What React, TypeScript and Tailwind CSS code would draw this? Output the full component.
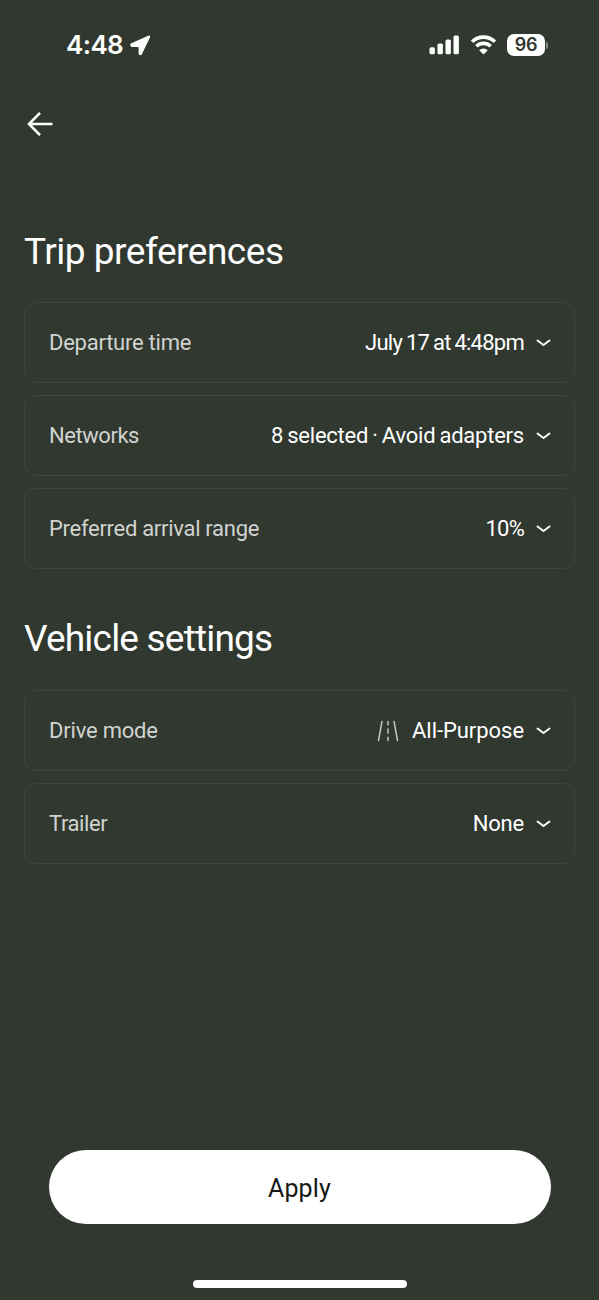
import type { ReactNode } from "react";

function LocationArrow() {
  return (
    <svg className="h-[21px] w-[21px]" viewBox="0 0 21 21" fill="#fff">
      <path d="M18.200.8 1.400 8.300C-.5 9.200 0 11.900 2.100 11.900h5.800c.5 0 .7.2.7.7v5.700c0 2.200 2.500 2.700 3.400.8L19.900 2.500C20.500 1.200 19.500.2 18.200.8Z" />
    </svg>
  );
}

function SignalBars() {
  return (
    <svg className="h-5 w-[31px]" viewBox="0 0 31 20" fill="#fff">
      <rect x="0.500" y="12.200" width="5.400" height="7" rx="1.500" />
      <rect x="8.500" y="8.500" width="5.400" height="10.700" rx="1.500" />
      <rect x="16.500" y="4.500" width="5.400" height="14.700" rx="1.500" />
      <rect x="24.500" y="0.500" width="5.400" height="18.700" rx="1.500" />
    </svg>
  );
}

function WifiIcon() {
  return (
    <svg className="h-5 w-[27px]" viewBox="0 0 27 20" fill="none" stroke="#fff">
      <path d="M2.100 6.700a16.300 16.300 0 0 1 22.800 0" strokeWidth="3.700" />
      <path d="M6.400 11.300a10 10 0 0 1 14.200 0" strokeWidth="3.600" />
      <path d="M13.500 19.600 9.200 15.300a6.100 6.100 0 0 1 8.600 0Z" fill="#fff" stroke="none" />
    </svg>
  );
}

function Battery({ level }: { level: number }) {
  return (
    <div className="flex items-center gap-[1px]">
      <div className="flex h-[22px] w-[38px] items-center justify-center rounded-[7px] bg-white font-[Inter,sans-serif] text-[18px] font-semibold leading-none tracking-[-0.3px] text-[#303830]">
        {level}
      </div>
      <div className="h-[7px] w-[2px] rounded-r-full bg-[#858b84]" />
    </div>
  );
}

function StatusBar() {
  return (
    <div className="flex h-[90px] items-center justify-between pl-[66px] pr-[51px]">
      <div className="flex items-center gap-[6px]">
        <span className="w-[58px] whitespace-nowrap font-[Inter,sans-serif] text-[26px] font-semibold leading-none tracking-[-0.6px]">
          4:48
        </span>
        <LocationArrow />
      </div>
      <div className="flex items-center gap-[10px]">
        <SignalBars />
        <WifiIcon />
        <Battery level={96} />
      </div>
    </div>
  );
}

function ChevronDown() {
  return (
    <svg
      className="h-[10px] w-[15px]"
      viewBox="0 0 15 10"
      fill="none"
      stroke="#fff"
      strokeWidth="1.900"
      strokeLinecap="round"
      strokeLinejoin="round"
    >
      <path d="m1.500 2.500 6 4.600 6-4.600" />
    </svg>
  );
}

function RoadIcon() {
  return (
    <svg
      className="h-[22px] w-[22px]"
      viewBox="0 0 22 22"
      fill="none"
      stroke="#c1c5c0"
      strokeWidth="1.500"
      strokeLinecap="round"
    >
      <path d="M5 1.500 1.500 20.500M17 1.500l3.500 19M11 1.500v3.200M11 9v4M11 17.300v3.200" />
    </svg>
  );
}

interface SettingRowProps {
  label: string;
  value: string;
  labelClass?: string;
  valueClass?: string;
  icon?: ReactNode;
}

function SettingRow({ label, value, labelClass = "", valueClass = "", icon }: SettingRowProps) {
  return (
    <button className="flex h-[81px] w-full items-center justify-between rounded-[12px] border border-[#3d463d] pl-6 pr-[23px] text-[22px] leading-none">
      <span className={`whitespace-nowrap pt-[1px] text-[#d0d3cf] ${labelClass}`}>{label}</span>
      <span className="flex items-center">
        {icon}
        <span className={`whitespace-nowrap pt-[1px] ${valueClass}`}>{value}</span>
        <span className="ml-3">
          <ChevronDown />
        </span>
      </span>
    </button>
  );
}

export default function App() {
  return (
    <div className="flex h-[1300px] w-[599px] flex-col overflow-hidden bg-[#303830] font-[Roboto,sans-serif] text-white">
      <StatusBar />

      <div className="flex h-[68px] items-center pl-[27px]">
        <svg
          className="h-[26px] w-[26px]"
          viewBox="0 0 26 26"
          fill="none"
          stroke="#fff"
          strokeWidth="2.600"
        >
          <path d="M13 1.800 2 13l11 11.200M2.500 13h23" />
        </svg>
      </div>

      <main className="flex-1 px-6">
        <h1 className="mt-[72px] h-[72px] whitespace-nowrap text-[37px] leading-[44px] tracking-[-0.48px]">
          Trip preferences
        </h1>
        <div className="flex flex-col gap-3">
          <SettingRow
            label="Departure time"
            value="July 17 at 4:48pm"
            labelClass="tracking-[-0.25px]"
            valueClass="tracking-[-0.75px] [word-spacing:-0.9px]"
          />
          <SettingRow
            label="Networks"
            value="8 selected · Avoid adapters"
            labelClass="tracking-[-0.45px]"
            valueClass="tracking-[-0.22px] [word-spacing:-1.200px]"
          />
          <SettingRow
            label="Preferred arrival range"
            value="10%"
            labelClass="tracking-[-0.29px]"
            valueClass="tracking-[-0.8px]"
          />
        </div>

        <h2 className="mt-[48px] h-[73px] whitespace-nowrap text-[37px] leading-[44px] tracking-[-0.8px]">
          Vehicle settings
        </h2>
        <div className="flex flex-col gap-3">
          <SettingRow
            label="Drive mode"
            value="All-Purpose"
            labelClass="tracking-[-0.2px]"
            valueClass="tracking-[-0.05px]"
            icon={
              <span className="mr-[13px]">
                <RoadIcon />
              </span>
            }
          />
          <SettingRow
            label="Trailer"
            value="None"
            labelClass="tracking-[-0.4px]"
            valueClass="tracking-[-0.2px]"
          />
        </div>
      </main>

      <footer className="flex h-[150px] flex-col items-center">
        <button className="h-[74px] w-[502px] rounded-full bg-white pt-[3px] text-[25px] tracking-[0.15px] text-[#151815]">
          Apply
        </button>
        <div className="mt-14 h-2 w-[214px] rounded-full bg-white" />
      </footer>
    </div>
  );
}
